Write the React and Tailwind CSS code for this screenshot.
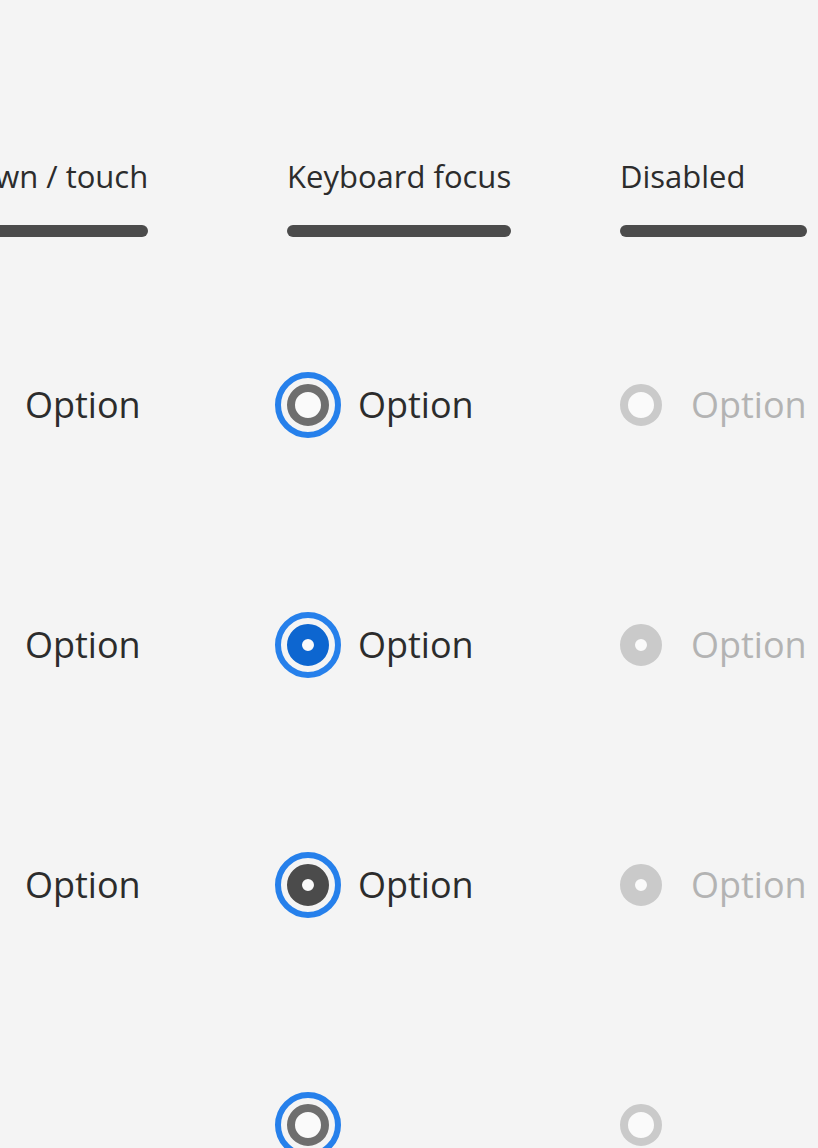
const rows = [
  { kind: 'empty', label: 'Option' },
  { kind: 'blue', label: 'Option' },
  { kind: 'dark', label: 'Option' },
  { kind: 'empty', label: '' },
];

function Radio({ kind, focus, disabled }) {
  let circle;
  if (disabled) {
    circle =
      kind === 'empty' ? (
        <div className="w-[42px] h-[42px] rounded-full border-[8px] border-[#cacaca] bg-[#fafafa]" />
      ) : (
        <div className="w-[42px] h-[42px] rounded-full border-[15px] border-[#cacaca] bg-[#fafafa]" />
      );
  } else if (kind === 'empty') {
    circle = <div className="w-[42px] h-[42px] rounded-full border-[8px] border-[#6e6e6e] bg-[#fafafa]" />;
  } else if (kind === 'blue') {
    circle = <div className="w-[42px] h-[42px] rounded-full border-[15px] border-[#0d66d0] bg-[#fafafa]" />;
  } else {
    circle = <div className="w-[42px] h-[42px] rounded-full border-[15px] border-[#4b4b4b] bg-[#fafafa]" />;
  }
  return (
    <div className="relative w-[42px] h-[42px] shrink-0">
      {focus && <div className="absolute -inset-[12px] rounded-full border-[6px] border-[#2680eb]" />}
      {circle}
    </div>
  );
}

function Column({ title, focus, disabled }) {
  return (
    <div className="flex flex-col w-fit">
      <div className="text-[31px] leading-[40px] text-[#2c2c2c] whitespace-nowrap">{title}</div>
      <div className="mt-[29px] h-[12px] rounded-full bg-[#4b4b4b]" />
      <div className="mt-[48px] flex flex-col">
        {rows.map((r, i) => (
          <div key={i} className="h-[240px] flex items-center gap-[29px]">
            <Radio kind={r.kind} focus={focus} disabled={disabled} />
            <span
              className={`text-[36px] whitespace-nowrap ${disabled ? 'text-[#b3b3b3]' : 'text-[#2c2c2c]'}`}
            >
              {r.label}
            </span>
          </div>
        ))}
      </div>
    </div>
  );
}

export default function App() {
  return (
    <div
      className="w-[818px] h-[1148px] overflow-hidden bg-[#f4f4f4]"
      style={{ fontFamily: '"Open Sans", sans-serif' }}
    >
      <div className="ml-[-46px] pt-[156px] grid grid-cols-[333px_333px_333px]">
        <Column title="Down / touch" />
        <Column title="Keyboard focus" focus />
        <Column title="Disabled" disabled />
      </div>
    </div>
  );
}
